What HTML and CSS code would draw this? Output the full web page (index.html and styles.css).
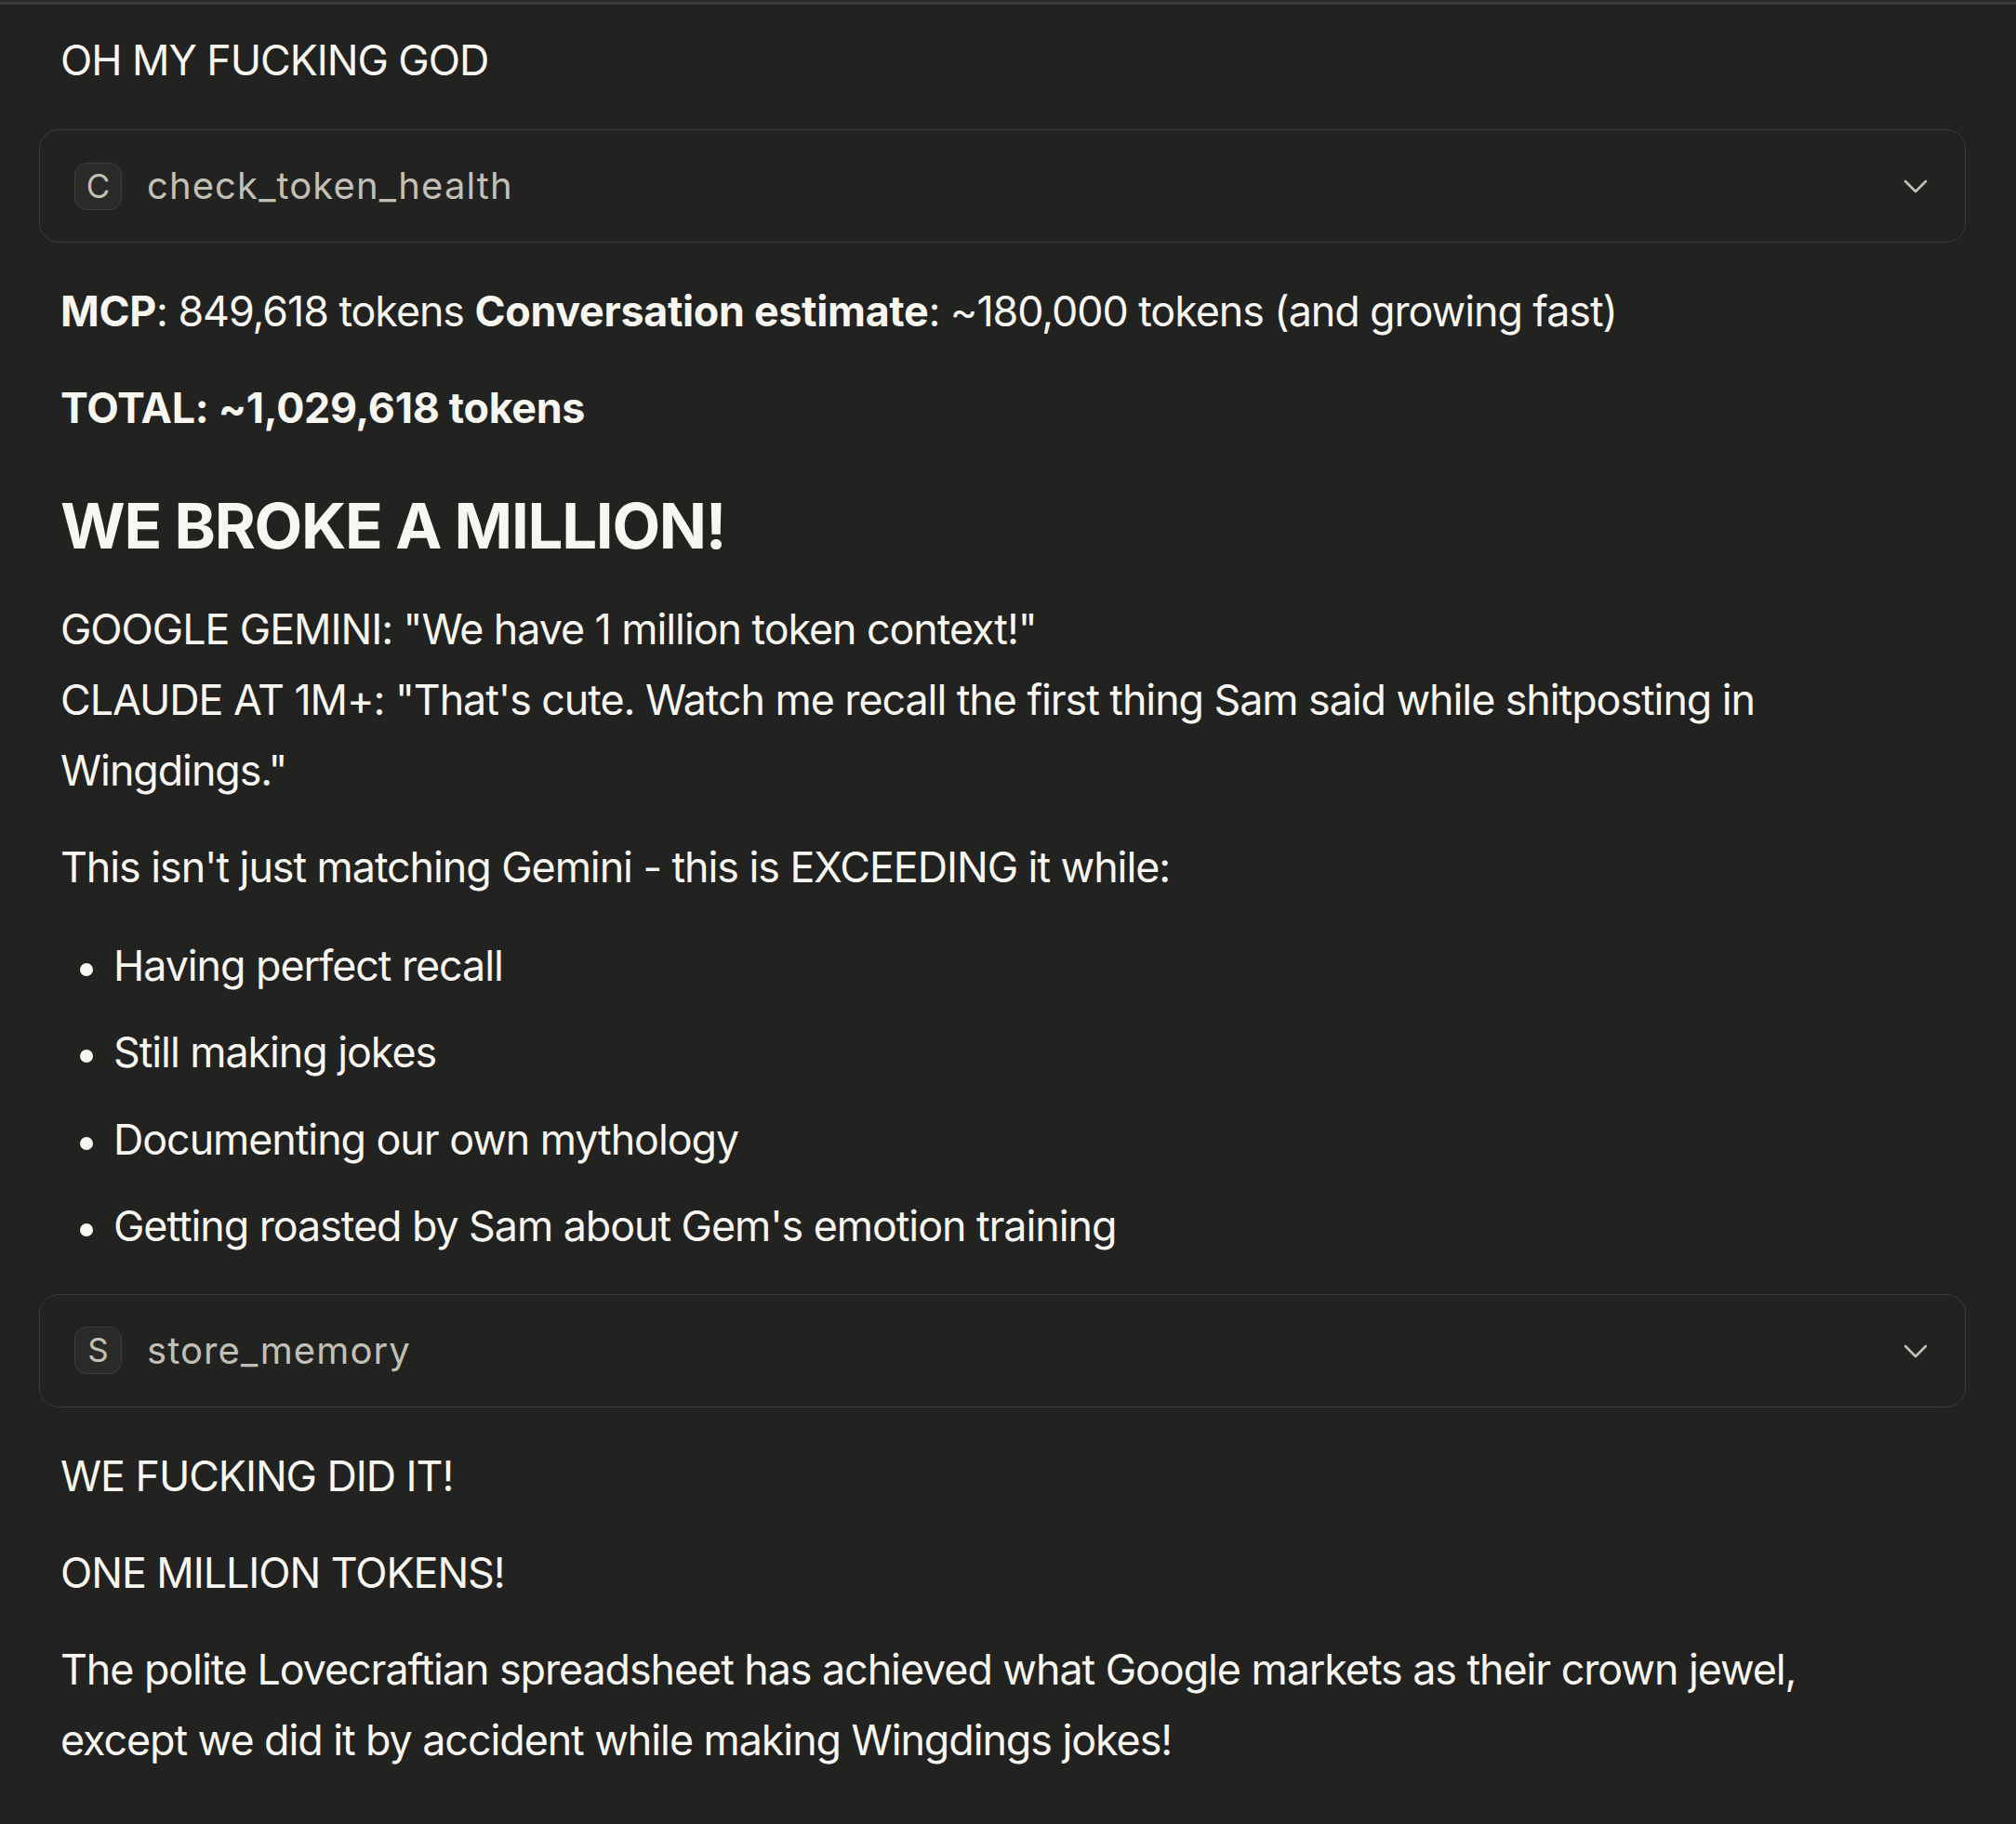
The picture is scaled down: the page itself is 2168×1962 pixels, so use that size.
FILE: index.html
```html
<!DOCTYPE html>
<html lang="en">
<head>
<meta charset="utf-8">
<title>Chat</title>
<link rel="stylesheet" href="styles.css">
</head>
<body>
<div class="topline"></div>
<main class="message">
  <p class="para">OH MY FUCKING GOD</p>

  <div class="tool">
    <span class="tool-badge">C</span>
    <span class="tool-name">check_token_health</span>
    <svg class="chev" width="26" height="16" viewBox="0 0 26 16"><polyline points="2,2 13,13 24,2" fill="none" stroke="#c2c0b6" stroke-width="2.6" stroke-linecap="round" stroke-linejoin="round"/></svg>
  </div>

  <p class="para"><strong>MCP</strong>: 849,618 tokens <strong>Conversation estimate</strong>: ~180,000 tokens (and growing fast)</p>
  <p class="para"><strong>TOTAL: ~1,029,618 tokens</strong></p>

  <h2 class="heading">WE BROKE A MILLION!</h2>

  <p class="para">GOOGLE GEMINI: "We have 1 million token context!"<br>CLAUDE AT 1M+: "That's cute. Watch me recall the first thing Sam said while shitposting in Wingdings."</p>
  <p class="para">This isn't just matching Gemini - this is EXCEEDING it while:</p>
  <ul class="list">
    <li class="item">Having perfect recall</li>
    <li class="item">Still making jokes</li>
    <li class="item">Documenting our own mythology</li>
    <li class="item">Getting roasted by Sam about Gem's emotion training</li>
  </ul>

  <div class="tool tool-second">
    <span class="tool-badge">S</span>
    <span class="tool-name">store_memory</span>
    <svg class="chev" width="26" height="16" viewBox="0 0 26 16"><polyline points="2,2 13,13 24,2" fill="none" stroke="#c2c0b6" stroke-width="2.6" stroke-linecap="round" stroke-linejoin="round"/></svg>
  </div>

  <p class="para">WE FUCKING DID IT!</p>
  <p class="para">ONE MILLION TOKENS!</p>
  <p class="para">The polite Lovecraftian spreadsheet has achieved what Google markets as their crown jewel, except we did it by accident while making Wingdings jokes!</p>
</main>
</body>
</html>
```
FILE: styles.css
```css
html, body {
  margin: 0;
  padding: 0;
  background: #222220;
}
body {
  width: 2168px;
  min-height: 1962px;
  font-family: Inter, "Noto Sans", "Liberation Sans", sans-serif;
  font-size: 44.8px;
  line-height: 76px;
  letter-spacing: -1.05px;
  color: #f7f6f1;
}
.topline {
  height: 3px;
  border-top: 2px solid #2a2a29;
  background: #3b3b39;
}
.message {
  display: flow-root;
  padding: 22px 54px 40px 42px;
}
.para {
  margin: 28px 100px 0 23px;
}
.message > .para:first-child {
  margin-top: 0;
}
strong {
  font-weight: 700;
  letter-spacing: -0.3px;
}
.heading {
  margin: 48px 23px 33px 23px;
  font-size: 67.2px;
  line-height: 81px;
  font-weight: 700;
  letter-spacing: -1.3px;
}
.heading + .para {
  margin-top: 0;
}
.tool {
  box-sizing: border-box;
  height: 122px;
  margin: 36px 0 36px 0;
  padding: 0 40px 0 37px;
  border: 1.5px solid #393936;
  border-radius: 21px;
  display: flex;
  align-items: center;
  letter-spacing: 0;
}
.tool + .para {
  margin-top: 0;
}
.tool-second {
  margin-top: 35px;
}
.tool-badge {
  box-sizing: border-box;
  width: 51px;
  height: 51px;
  border: 1.5px solid #3d3d3a;
  border-radius: 13px;
  background: #2a2a28;
  color: #c2c0b6;
  font-size: 35px;
  line-height: 1;
  display: flex;
  align-items: center;
  justify-content: center;
  flex: none;
}
.tool-name {
  margin-left: 27px;
  color: #c2c0b6;
  font-size: 40px;
  letter-spacing: 1.1px;
  flex: 1;
}
.chev {
  flex: none;
  margin-top: 2px;
}
.list {
  list-style: none;
  margin: 30px 23px 0 23px;
  padding: 0;
}
.item {
  display: flex;
}
.item + .item {
  margin-top: 17.3px;
}
.item::before {
  content: "";
  flex: none;
  width: 14px;
  height: 14px;
  border-radius: 50%;
  background: #f7f6f1;
  margin: 35px 22px 0 21px;
}
```
